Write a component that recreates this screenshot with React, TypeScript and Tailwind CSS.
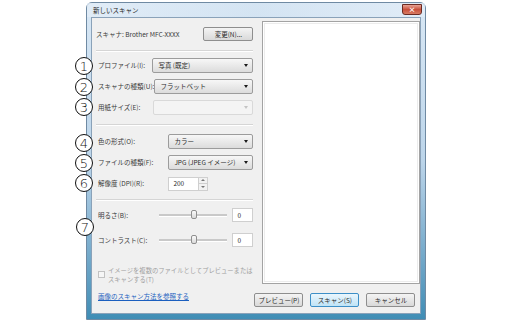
const FONT = "font-['Noto_Sans_CJK_JP','Noto_Sans',sans-serif]"

function Arrow({ disabled }: { disabled?: boolean }) {
  return (
    <span
      className={`w-0 h-0 border-x-[2.5px] border-x-transparent border-t-[3px] ${
        disabled ? 'border-t-[#c4c4c4]' : 'border-t-[#1a1a1a]'
      }`}
    />
  )
}

function Select({ value, width, disabled }: { value?: string; width: string; disabled?: boolean }) {
  return (
    <div
      className={`${width} h-[15px] shrink-0 flex items-center justify-between rounded-[2px] border pl-[5px] pr-[4px] ${
        disabled
          ? 'border-[#d9d9d9] bg-[#f4f4f4]'
          : 'border-[#9c9c9c] bg-gradient-to-b from-[#f7f7f7] to-[#dcdcdc]'
      }`}
    >
      <span className="text-[6.5px] leading-none text-[#2a2a2a]">{value}</span>
      <Arrow disabled={disabled} />
    </div>
  )
}

function Row({ label, children }: { label: string; children: React.ReactNode }) {
  return (
    <div className="h-[15px] flex items-center justify-between pl-[2px]">
      <span className="text-[6.5px] leading-none text-[#3a3a3a] whitespace-nowrap">{label}</span>
      {children}
    </div>
  )
}

function Separator({ className }: { className: string }) {
  return <div className={`h-px bg-[#d5d5d5] border-b border-white box-content ${className}`} />
}

function Slider() {
  return (
    <div className="w-[68px] h-[14px] relative flex items-center">
      <div className="w-full h-[2px] bg-[#c9c9c9] border-b border-white box-content" />
      <div className="absolute left-[32px] top-[2px] w-[6px] h-[9px] rounded-[2px] border border-[#8f8f8f] bg-gradient-to-b from-[#fafafa] to-[#dadada]" />
    </div>
  )
}

function NumBox({ value, width }: { value: string; width: string }) {
  return (
    <div className={`${width} h-[14px] border border-[#cfcfcf] bg-white flex items-center pl-[4px]`}>
      <span className="text-[6.5px] leading-none text-[#2a2a2a]">{value}</span>
    </div>
  )
}

function Button({ label, primary, width }: { label: string; primary?: boolean; width: string }) {
  return (
    <div
      className={`${width} h-[14px] flex items-center justify-center rounded-[2px] border ${
        primary
          ? 'border-[#3d8fc7] bg-gradient-to-b from-[#eaf6fd] to-[#bfe3f6]'
          : 'border-[#8e8e8e] bg-gradient-to-b from-[#f4f4f4] to-[#d9d9d9]'
      }`}
    >
      <span className="text-[6.5px] leading-none text-[#2a2a2a]">{label}</span>
    </div>
  )
}

function Marker({ n, top, left }: { n: string; top: string; left: string }) {
  return (
    <div
      className={`absolute ${top} ${left} w-[18px] h-[18px] rounded-full border border-[#111] bg-white flex items-center justify-center`}
    >
      <span className="font-['DejaVu_Sans',sans-serif] text-[13px] leading-none text-[#111] font-light">{n}</span>
    </div>
  )
}

export default function App() {
  return (
    <div className={`w-[515px] h-[324px] bg-white relative overflow-hidden pl-[86px] pt-[2px] ${FONT}`}>
      {/* Window */}
      <div className="w-[340px] h-[318px] rounded-t-[6px] border border-[#6f8aa3] bg-gradient-to-b from-[#d9e8f5] via-[#bcd5ea] to-[#3f8db5] flex flex-col">
        {/* Title bar */}
        <div className="h-[14px] flex items-center justify-between pl-[6px] pr-[3px] bg-gradient-to-r from-[#e4eef8]/70 via-[#cfe0f0]/40 to-[#e4eef8]/70">
          <span className="text-[6.5px] leading-none text-[#1e1e1e]">新しいスキャン</span>
          <div className="w-[20px] h-[11px] -mt-[2px] rounded-b-[3px] border border-[#6b2a22] bg-gradient-to-b from-[#e8a395] via-[#c8503c] to-[#d77a62] flex items-center justify-center">
            <span className="text-[7px] leading-none text-white font-bold">×</span>
          </div>
        </div>

        {/* Client */}
        <div className="mx-[4px] flex-1 mb-[5px] border border-[#8aa2b9] bg-[#f0f0f0] flex">
          {/* Left column */}
          <div className="w-[163px] pl-[4px] pr-[1px] flex flex-col">
            <div className="mt-[9px] h-[14px] flex items-center justify-between">
              <span className="text-[6.5px] leading-none text-[#3a3a3a]">スキャナ: Brother MFC-XXXX</span>
              <Button label="変更(N)..." width="w-[50px]" />
            </div>
            <Separator className="mt-[9px]" />
            <div className="mt-[6px] flex flex-col gap-[6px]">
              <Row label="プロファイル(I):">
                <Select value="写真 (既定)" width="w-[101px]" />
              </Row>
              <Row label="スキャナの種類(U):">
                <Select value="フラットベット" width="w-[99px]" />
              </Row>
              <Row label="用紙サイズ(E):">
                <Select width="w-[100px]" disabled />
              </Row>
            </div>
            <Separator className="mt-[9px]" />
            <div className="mt-[8px] flex flex-col gap-[6px]">
              <Row label="色の形式(O):">
                <Select value="カラー" width="w-[85px]" />
              </Row>
              <Row label="ファイルの種類(F):">
                <Select value="JPG (JPEG イメージ)" width="w-[85px]" />
              </Row>
              <Row label="解像度 (DPI)(R):">
                <div className="w-[85px] flex items-center">
                  <NumBox value="200" width="w-[31px]" />
                  <div className="w-[9px] h-[14px] flex flex-col">
                    <div className="flex-1 border border-[#cfcfcf] border-l-0 bg-[#f2f2f2] flex items-center justify-center">
                      <span className="w-0 h-0 border-x-[2px] border-x-transparent border-b-[2px] border-b-[#777]" />
                    </div>
                    <div className="flex-1 border border-[#cfcfcf] border-l-0 border-t-0 bg-[#f2f2f2] flex items-center justify-center">
                      <span className="w-0 h-0 border-x-[2px] border-x-transparent border-t-[2px] border-t-[#777]" />
                    </div>
                  </div>
                </div>
              </Row>
            </div>
            <Separator className="mt-[8px]" />
            <div className="mt-[7px] h-[14px] flex items-center justify-between pl-[2px]">
              <span className="text-[6.5px] leading-none text-[#3a3a3a]">明るさ(B):</span>
              <div className="flex items-center gap-[5px]">
                <Slider />
                <NumBox value="0" width="w-[21px]" />
              </div>
            </div>
            <div className="mt-[11px] h-[14px] flex items-center justify-between pl-[2px]">
              <span className="text-[6.5px] leading-none text-[#3a3a3a]">コントラスト(C):</span>
              <div className="flex items-center gap-[5px]">
                <Slider />
                <NumBox value="0" width="w-[21px]" />
              </div>
            </div>
            <div className="mt-[19px] flex items-start gap-[3px] pl-[2px]">
              <div className="mt-[5px] w-[7px] h-[7px] border border-[#c2c2c2] bg-[#f6f6f6] shrink-0" />
              <span className="text-[6.3px] leading-[9px] text-[#a0a0a0] whitespace-nowrap">
                イメージを複数のファイルとしてプレビューまたは
                <br />
                スキャンする(T)
              </span>
            </div>
            <span className="mt-[7px] pl-[2px] text-[6.5px] leading-[10px] text-[#1b5fbf] underline">
              画像のスキャン方法を参照する
            </span>
          </div>

          {/* Right column */}
          <div className="flex-1 flex flex-col">
            <div className="mt-[3px] ml-[8px] mr-px h-[263px] border border-[#a3a3a3] bg-white p-px">
              <div className="w-full h-full border border-[#ececec]" />
            </div>
            <div className="mt-[9px] flex justify-end gap-[7px] pr-[6px]">
              <Button label="プレビュー(P)" width="w-[49px]" />
              <Button label="スキャン(S)" width="w-[49px]" primary />
              <Button label="キャンセル" width="w-[49px]" />
            </div>
          </div>
        </div>
      </div>

      {/* Callout markers */}
      <Marker n="1" top="top-[57px]" left="left-[75px]" />
      <Marker n="2" top="top-[78px]" left="left-[75px]" />
      <Marker n="3" top="top-[98px]" left="left-[75px]" />
      <Marker n="4" top="top-[134px]" left="left-[75px]" />
      <Marker n="5" top="top-[154px]" left="left-[75px]" />
      <Marker n="6" top="top-[174px]" left="left-[75px]" />
      <Marker n="7" top="top-[218px]" left="left-[76px]" />
    </div>
  )
}
